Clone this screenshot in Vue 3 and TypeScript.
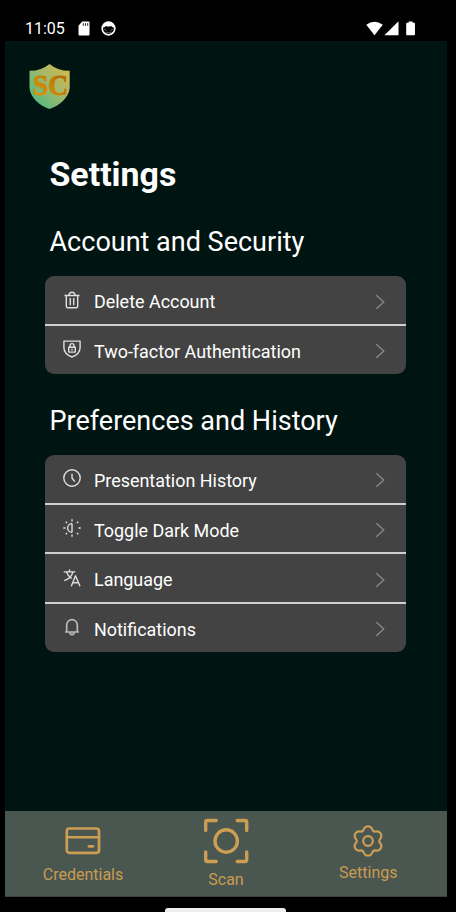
<script setup lang="ts">
interface Row { label: string; icon: string }
interface Section { title: string; rows: Row[] }

const sections: Section[] = [
  {
    title: 'Account and Security',
    rows: [
      { label: 'Delete Account', icon: 'trash' },
      { label: 'Two-factor Authentication', icon: 'shield' },
    ],
  },
  {
    title: 'Preferences and History',
    rows: [
      { label: 'Presentation History', icon: 'clock' },
      { label: 'Toggle Dark Mode', icon: 'sun' },
      { label: 'Language', icon: 'language' },
      { label: 'Notifications', icon: 'bell' },
    ],
  },
]

// Six-lobed gear outline around the origin, first lobe pointing up.
const gearPath: string = Array.from({ length: 72 }, (_, i) => {
  const a = (i * Math.PI) / 36
  const r = 13.2 + 1.75 * Math.cos(6 * a) - 0.3 * Math.cos(12 * a)
  return `${i ? 'L' : 'M'}${(r * Math.sin(a)).toFixed(2)} ${(-r * Math.cos(a)).toFixed(2)}`
}).join('') + 'Z'
</script>

<template>
  <div class="device">
    <header class="status">
      <span class="time">11:05</span>
      <svg class="sd" width="12" height="15" viewBox="0 0 12 15">
        <path d="M4.2.5h6.3a1 1 0 0 1 1 1v12a1 1 0 0 1-1 1h-9a1 1 0 0 1-1-1V4.800z" fill="#fff" />
        <path d="M5.300 2.200v2.600M7.500 2.200v2.600M9.700 2.200v2.600" stroke="#222" stroke-width="1" />
      </svg>
      <svg class="cat" width="15" height="15" viewBox="0 0 15 15">
        <circle cx="7.5" cy="7.5" r="6.3" fill="#050505" stroke="#fff" stroke-width="1.700" />
        <path d="M2 3 7.500 1 13 3l-.5 4-2.300-2q-2.700 1-5.400 0L2.500 7z" fill="#fff" />
        <path d="M3.200 8.200l2.200 1M11.800 8.200l-2.200 1M4.500 11q3 1.600 6 0" fill="none" stroke="#777" stroke-width=".8" />
      </svg>
      <svg class="signals" width="50" height="15" viewBox="0 0 50 15">
        <path d="M.3 3.800Q8.500-2.200 16.800 3.800L8.500 14.200z" fill="#fff" />
        <path d="M32.500.3V14.200H18.400z" fill="#fff" />
        <path d="M42.600.5h4v1.200h1.400a1 1 0 0 1 1 1v10.500a1 1 0 0 1-1 1h-6.800a1 1 0 0 1-1-1V2.700a1 1 0 0 1 1-1h1.400z" fill="#fff" />
      </svg>
    </header>

    <div class="screen">
      <main class="content">
        <svg class="logo" width="42" height="46" viewBox="0 0 42 46">
          <defs>
            <linearGradient id="shieldFill" x1="0" y1="1" x2="1" y2="0">
              <stop offset=".15" stop-color="#58b883" />
              <stop offset=".55" stop-color="#a0b96b" />
              <stop offset="1" stop-color="#dfb847" />
            </linearGradient>
            <linearGradient id="letterFill" x1="0" y1="1" x2="1" y2="0">
              <stop offset="0" stop-color="#e39a05" />
              <stop offset=".5" stop-color="#c78208" />
              <stop offset="1" stop-color="#a05c08" />
            </linearGradient>
          </defs>
          <path d="M20.500 0Q29 7 40.700 6.800V24C39.700 34 30.500 41.500 20.500 45 10.500 41.500 1.500 34 .5 24V6.800Q12 7 20.500 0z" fill="url(#shieldFill)" />
          <text x="4" y="30.500" textLength="35" lengthAdjust="spacingAndGlyphs" class="monogram" fill="url(#letterFill)" stroke="url(#letterFill)" stroke-width=".8">SC</text>
        </svg>

        <h1>Settings</h1>

        <section v-for="section in sections" :key="section.title">
          <h2>{{ section.title }}</h2>
          <ul class="card">
            <li v-for="row in section.rows" :key="row.label" class="row">
              <svg class="icon" width="18" height="18" viewBox="0 0 18 18">
                <g v-if="row.icon === 'trash'">
                  <path d="M1.500 4.500h15M6 4.300Q6 1.200 9 1.200t3 3.100M3.300 4.500v10.800q0 1.500 1.500 1.500h8.400q1.500 0 1.500-1.500V4.500M7.300 7v7.200M10.700 7v7.200" />
                </g>
                <g v-else-if="row.icon === 'shield'">
                  <path d="M.9 1.100h16.200v6.400c0 4.500-3.200 7.700-8.100 9.500C4.100 15.200.9 12 .9 7.500z" />
                  <path d="M5.700 7.200h6.600v4.900H5.700zM7 7V5.600a2 2 0 0 1 4 0V7M9 8.800v1.600" />
                </g>
                <g v-else-if="row.icon === 'clock'">
                  <circle cx="9" cy="9" r="8.200" />
                  <path d="M9 4.800V9l2.800 3.700" />
                </g>
                <g v-else-if="row.icon === 'sun'">
                  <path d="M9 .3v2.300M9 4.400v9.200M9 15.400v2.300M.3 9h2.200M15.500 9h2.200M2.700 2.700l1.300 1.300M2.700 15.300l1.300-1.300M14 4l1.300-1.300M14 14l1.300 1.300" />
                  <path d="M9 4.600A4.400 4.400 0 0 0 9 13.400" />
                </g>
                <g v-else-if="row.icon === 'language'">
                  <path d="M.7 2.900h11.600M6.500.4v2.500M9.800 3.100C8.900 7.200 5.700 10 1.300 11.600M3.500 3.100C4.500 6.100 6.200 8 8.700 9.300M8.300 17.300l4.200-10.500 4.500 10.500M9.700 13.700h5.800" />
                </g>
                <g v-else class="dim">
                  <path d="M2.100 14h13.800M3.700 13.800V7a5.300 5.300 0 0 1 10.600 0v6.800M7 14.300q0 2.400 2 2.400t2-2.400" />
                </g>
              </svg>
              <span class="label">{{ row.label }}</span>
              <svg class="chevron" width="10" height="16" viewBox="0 0 10 16">
                <path d="M1.300 1.200 8.800 8 1.300 14.800" />
              </svg>
            </li>
          </ul>
        </section>
      </main>

      <nav class="tabs">
        <a class="tab credentials">
          <svg width="36" height="28" viewBox="0 0 36 28">
            <rect x="1.800" y="1.500" width="32.200" height="24.300" rx="2.500" stroke-width="2.700" />
            <path d="M1.800 10.300H34" stroke-width="2.400" />
            <path d="M24 19.300h4" stroke-width="2.800" />
          </svg>
          <span>Credentials</span>
        </a>
        <a class="tab scan">
          <svg width="46" height="46" viewBox="0 0 46 46">
            <circle cx="23.200" cy="23" r="11.200" stroke-width="3.400" />
            <path d="M2.700 12.500V4.200q0-1.700 1.700-1.700h8.800M34.200 2.500h7.800q1.700 0 1.700 1.700v8.300M43.700 34v7.800q0 1.700-1.700 1.700h-7.800M13.200 43.500H4.400q-1.700 0-1.700-1.700V34" stroke-width="3.400" />
          </svg>
          <span>Scan</span>
        </a>
        <a class="tab settings">
          <svg width="34" height="34" viewBox="-17 -17 34 34">
            <path :d="gearPath" stroke-width="2.200" />
            <circle r="4.800" stroke-width="2.200" />
          </svg>
          <span>Settings</span>
        </a>
      </nav>
    </div>
    <footer class="gesture"><div class="pill"></div></footer>
  </div>
</template>

<style>
body { background: #000; }
</style>

<style scoped>
.device {
  width: 456px;
  height: 912px;
  overflow: hidden;
  background: #000;
  color: #fff;
  font-family: Roboto, "Liberation Sans", sans-serif;
  display: flex;
  flex-direction: column;
}
.status {
  flex: none;
  height: 41px;
  display: flex;
  align-items: center;
  padding: 15px 40px 0 25px;
  box-sizing: border-box;
}
.time { width: 53px; padding-top: 2px; font-size: 16px; line-height: 20px; }
.cat { margin-left: 11px; }
.signals { margin-left: auto; }
.screen {
  flex: none;
  width: 442px;
  height: 856px;
  margin-left: 5px;
  background: #001412;
  display: flex;
  flex-direction: column;
}
.content { flex: 1; padding: 23px 41px 0 40px; }
.logo { display: block; margin-left: -16px; }
.monogram { font: bold 29px "Liberation Serif", serif; }
h1 {
  margin: 44px 0 -1px 4.500px;
  font-size: 33.900px;
  line-height: 42px;
  font-weight: 700;
}
h2 {
  margin: 0 0 0 4.500px;
  font-size: 27px;
  line-height: 34px;
  font-weight: 400;
  white-space: nowrap;
}
section { padding-top: 30px; }
.card {
  list-style: none;
  margin: 17px 0 0;
  padding: 0;
  background: #434343;
  border-radius: 9px;
}
.row {
  height: 48px;
  box-sizing: border-box;
  display: flex;
  align-items: center;
  padding: 3px 21.500px 0 18px;
}
.row + .row { height: 49.700px; border-top: 2px solid #cfcfcf; }
.icon {
  flex: none;
  margin-top: -4px;
  fill: none;
  stroke: #dedede;
  stroke-width: 1.400;
  stroke-linejoin: round;
}
.dim { stroke: #b8b8b8; stroke-width: 1.700; }
.label { flex: 1; margin-left: 13px; font-size: 17.930px; white-space: nowrap; }
.chevron { fill: none; stroke: #8b8b8b; stroke-width: 1.300; }
.tabs {
  flex: none;
  height: 86px;
  box-sizing: border-box;
  background: #4a5650;
  border-bottom: 1px solid #39423e;
  color: #c99c51;
  display: grid;
  grid-template-columns: 156px 130px 154.500px;
}
.tab {
  display: flex;
  flex-direction: column;
  align-items: center;
  font-size: 16px;
  line-height: 20px;
}
.tab svg { fill: none; stroke: #cb9e53; stroke-linecap: round; stroke-linejoin: round; }
.credentials { padding-top: 16px; gap: 10px; }
.scan { padding-top: 7px; gap: 6px; }
.settings { padding-top: 13px; gap: 5px; }
.gesture { flex: 1; display: flex; padding: 11px 0 0 165px; }
.pill { flex: none; width: 121px; height: 8px; border-radius: 3px; background: #eee; }
</style>
